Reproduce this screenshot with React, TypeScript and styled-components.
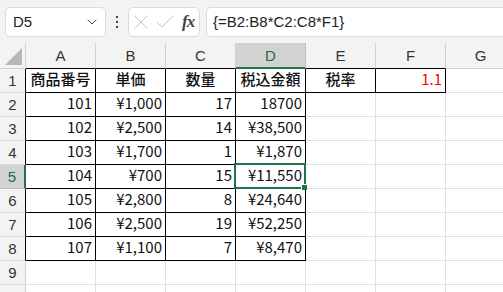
import React from "react";
import styled, { createGlobalStyle } from "styled-components";
import { ChevronDown, X, Check } from "lucide-react";

const GREEN = "#217346";
const GRID = "#e1e1e1";
const INK = "#000";
const HEAD_BG = "#f3f3f3";
const ACTIVE_BG = "#d2d2d2";

const COLS = ["A", "B", "C", "D", "E", "F", "G"];
const ROWS = [1, 2, 3, 4, 5, 6, 7, 8, 9, 10];
const ACTIVE_ROW = 5;
const ACTIVE_COL = 4;

type CellData = { text: string; align?: "left" | "center" | "right"; bold?: boolean; color?: string };

const head = (text: string): CellData => ({ text, align: "center", bold: true });
const num = (text: string): CellData => ({ text, align: "right" });

const DATA: CellData[][] = [
  [head("商品番号"), head("単価"), head("数量"), head("税込金額"), head("税率"), { text: "1.1", align: "right", color: "#ff0000" }],
  [num("101"), num("¥1,000"), num("17"), num("18700")],
  [num("102"), num("¥2,500"), num("14"), num("¥38,500")],
  [num("103"), num("¥1,700"), num("1"), num("¥1,870")],
  [num("104"), num("¥700"), num("15"), num("¥11,550")],
  [num("105"), num("¥2,800"), num("8"), num("¥24,640")],
  [num("106"), num("¥2,500"), num("19"), num("¥52,250")],
  [num("107"), num("¥1,100"), num("7"), num("¥8,470")],
];

// A1:D8 plus E1:F1 carry black borders
const boxed = (r: number, c: number) =>
  (r >= 1 && r <= 8 && c >= 1 && c <= 4) || (r === 1 && (c === 5 || c === 6));

const GlobalStyle = createGlobalStyle`
  html, body {
    margin: 0;
    padding: 0;
    background: #fff;
  }
  body {
    font-family: "Noto Sans CJK JP", "Noto Sans", sans-serif;
    color: #000;
  }
`;

const Window = styled.div`
  width: 503px;
  height: 292px;
  overflow: hidden;
  background: #fff;
`;

const FormulaBar = styled.div`
  display: flex;
  align-items: center;
  height: 43px;
  box-sizing: border-box;
  padding-left: 5px;
  background: ${HEAD_BG};
`;

const Field = styled.div`
  height: 30px;
  box-sizing: border-box;
  background: #fff;
  border: 1px solid #dcdcdc;
  border-radius: 5px;
  display: flex;
  align-items: center;
`;

const NameBox = styled(Field)`
  width: 101px;
  padding: 0 5px 0 7px;
  justify-content: space-between;
  font-family: "Liberation Sans", Arial, sans-serif;
  font-size: 15px;
  color: #222;
`;

const Dots = styled.div`
  width: 22px;
  display: flex;
  flex-direction: column;
  align-items: center;
  gap: 3px;

  span {
    width: 2px;
    height: 2px;
    background: #444;
  }
`;

const FxBox = styled(Field)`
  width: 72px;
  padding-left: 0;
  color: #c4c4c4;
`;

const FxGlyph = styled.span`
  margin-left: 5px;
  font-family: "Liberation Serif", "Times New Roman", serif;
  font-style: italic;
  font-weight: bold;
  font-size: 17px;
  color: #444;
  letter-spacing: -1px;
`;

const FormulaField = styled(Field)`
  flex: 1;
  margin-left: 6px;
  border-right: none;
  border-radius: 5px 0 0 5px;
  padding-left: 6px;
  font-family: "Liberation Sans", Arial, sans-serif;
  font-size: 15px;
  color: #222;
`;

const Sheet = styled.div`
  display: grid;
  grid-template-columns: 26px repeat(7, 70px);
  grid-template-rows: 26px repeat(10, 24px);
`;

const Corner = styled.div`
  background: ${HEAD_BG};
  border-right: 1px solid #d0d0d0;
  border-bottom: 1px solid #d0d0d0;
  box-sizing: border-box;
  display: flex;
  align-items: flex-end;
  justify-content: flex-end;
  padding: 0 3px 3px 0;
`;

const Triangle = styled.div`
  width: 0;
  height: 0;
  border-left: 17px solid transparent;
  border-bottom: 17px solid #b7b7b7;
`;

const ColHead = styled.div<{ $active?: boolean; $bottom: string }>`
  box-sizing: border-box;
  display: flex;
  align-items: center;
  justify-content: center;
  background: ${(p) => (p.$active ? ACTIVE_BG : HEAD_BG)};
  color: ${(p) => (p.$active ? "#1b6b3e" : "#333")};
  border-right: 1px solid ${(p) => (p.$active ? "#bdbdbd" : "#d0d0d0")};
  border-bottom: ${(p) => (p.$active ? `2px solid ${GREEN}` : `1px solid ${p.$bottom}`)};
  font-family: "Liberation Sans", Arial, sans-serif;
  font-size: 15px;
`;

const RowHead = styled.div<{ $active?: boolean; $right: string }>`
  box-sizing: border-box;
  display: flex;
  align-items: center;
  justify-content: center;
  background: ${(p) => (p.$active ? ACTIVE_BG : HEAD_BG)};
  color: ${(p) => (p.$active ? "#1b6b3e" : "#333")};
  border-bottom: 1px solid ${(p) => (p.$active ? "#bdbdbd" : "#dadada")};
  border-right: ${(p) => (p.$active ? `2px solid ${GREEN}` : `1px solid ${p.$right}`)};
  font-family: "Liberation Sans", Arial, sans-serif;
  font-size: 15px;
`;

const Cell = styled.div<{
  $right: string;
  $bottom: string;
  $align: string;
  $bold?: boolean;
  $color?: string;
  $selected?: boolean;
}>`
  position: ${(p) => (p.$selected ? "relative" : "static")};
  box-sizing: border-box;
  border-right: 1px solid ${(p) => p.$right};
  border-bottom: 1px solid ${(p) => p.$bottom};
  padding: 1px 3px 0;
  text-align: ${(p) => p.$align};
  font-size: 15px;
  line-height: 18px;
  font-weight: ${(p) => (p.$bold ? 500 : 400)};
  color: ${(p) => p.$color || "#111"};
  white-space: nowrap;
  overflow: visible;
`;

// selection frame sits over the neighbouring gridlines
const Selection = styled.div`
  position: absolute;
  left: -2px;
  top: -2px;
  right: -1px;
  bottom: -1px;
  border: 2px solid ${GREEN};
  z-index: 2;
  pointer-events: none;

  &::after {
    content: "";
    position: absolute;
    right: -3px;
    bottom: -3px;
    width: 5px;
    height: 5px;
    background: ${GREEN};
    border-left: 1px solid #fff;
    border-top: 1px solid #fff;
  }
`;

const App = () => {
  return (
    <Window>
      <GlobalStyle />
      <FormulaBar>
        <NameBox>
          D5
          <ChevronDown size={16} strokeWidth={1.5} color="#444" />
        </NameBox>
        <Dots>
          <span />
          <span />
          <span />
        </Dots>
        <FxBox>
          <X size={24} strokeWidth={1} />
          <Check size={24} strokeWidth={1} />
          <FxGlyph>fx</FxGlyph>
        </FxBox>
        <FormulaField>{"{=B2:B8*C2:C8*F1}"}</FormulaField>
      </FormulaBar>

      <Sheet>
        <Corner>
          <Triangle />
        </Corner>
        {COLS.map((col, i) => (
          <ColHead key={col} $active={i + 1 === ACTIVE_COL} $bottom={boxed(1, i + 1) ? INK : "#d0d0d0"}>
            {col}
          </ColHead>
        ))}

        {ROWS.map((r) => (
          <React.Fragment key={r}>
            <RowHead $active={r === ACTIVE_ROW} $right={boxed(r, 1) ? INK : "#d0d0d0"}>
              {r}
            </RowHead>
            {COLS.map((col, i) => {
              const c = i + 1;
              const d = DATA[r - 1]?.[i];
              const selected = r === ACTIVE_ROW && c === ACTIVE_COL;
              return (
                <Cell
                  key={col}
                  $right={boxed(r, c) || boxed(r, c + 1) ? INK : GRID}
                  $bottom={boxed(r, c) || boxed(r + 1, c) ? INK : GRID}
                  $align={d?.align || "left"}
                  $bold={d?.bold}
                  $color={d?.color}
                  $selected={selected}
                >
                  {d?.text}
                  {selected && <Selection />}
                </Cell>
              );
            })}
          </React.Fragment>
        ))}
      </Sheet>
    </Window>
  );
};

export default App;
